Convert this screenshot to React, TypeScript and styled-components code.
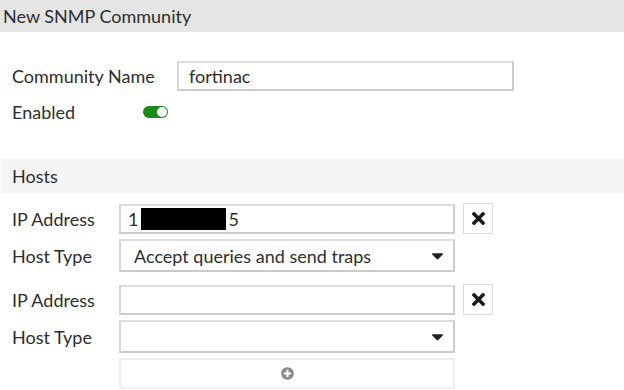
import React, { useState } from "react";
import styled, { createGlobalStyle } from "styled-components";
import { FaTimes, FaCaretDown, FaPlusCircle } from "react-icons/fa";

const GlobalStyle = createGlobalStyle`
  html, body {
    margin: 0;
    padding: 0;
    background: #ffffff;
    font-family: Lato, "Open Sans", sans-serif;
    color: #333333;
  }
`;

type Host = {
  ip: string;
  masked: boolean;
  type: string;
};

const App = () => {
  const [enabled, setEnabled] = useState<boolean>(true);
  const hosts: Host[] = [
    { ip: "1", masked: true, type: "Accept queries and send traps" },
    { ip: "", masked: false, type: "" },
  ];

  return (
    <Page>
      <GlobalStyle />
      <TitleBar>New SNMP Community</TitleBar>

      <TopForm>
        <Label>Community Name</Label>
        <TextBox $pad={10}>fortinac</TextBox>
        <Label>Enabled</Label>
        <ToggleCell>
          <Toggle $on={enabled} onClick={() => setEnabled(!enabled)}>
            <Knob $on={enabled} />
          </Toggle>
        </ToggleCell>
      </TopForm>

      <SectionBar>Hosts</SectionBar>

      <HostList>
        {hosts.map((h, i) => (
          <HostGroup key={i}>
            <Label>IP Address</Label>
            <TextBox $pad={7}>
              {h.ip}
              {h.masked && (
                <>
                  <Mask />5
                </>
              )}
            </TextBox>
            <RemoveButton>
              <FaTimes size={19} />
            </RemoveButton>
            <Label>Host Type</Label>
            <SelectBox>
              <span>{h.type}</span>
              <Caret>
                <FaCaretDown size={19} />
              </Caret>
            </SelectBox>
          </HostGroup>
        ))}
        <AddRow>
          <AddButton>
            <FaPlusCircle size={13} />
          </AddButton>
        </AddRow>
      </HostList>
    </Page>
  );
};

export default App;

const Page = styled.div`
  width: 624px;
  height: 390px;
  overflow: hidden;
`;

const TitleBar = styled.div`
  height: 32px;
  background: #e5e5e5;
  padding-left: 3px;
  font-size: 18px;
  line-height: 32px;
  color: #2e2e2e;
`;

const TopForm = styled.div`
  display: grid;
  grid-template-columns: 165px 337px;
  row-gap: 9px;
  align-items: center;
  align-content: start;
  padding: 29px 0 0 12px;
  height: 127px;
  box-sizing: border-box;
`;

const Label = styled.div`
  font-size: 18px;
  color: #2e2e2e;
`;

const TextBox = styled.div<{ $pad: number }>`
  height: 30px;
  box-sizing: border-box;
  border: 2px solid #cbcbcb;
  border-top-color: #dedede;
  border-left-color: #d6d6d6;
  padding-left: ${(p) => p.$pad}px;
  display: flex;
  align-items: center;
  font-size: 18px;
  color: #2e2e2e;
  background: #fff;
`;

const Mask = styled.span`
  display: inline-block;
  width: 85px;
  height: 22px;
  background: #000;
  margin: 0 2px 0 3px;
`;

const ToggleCell = styled.div`
  height: 24px;
  display: flex;
  align-items: center;
`;

const Toggle = styled.div<{ $on: boolean }>`
  width: 25px;
  height: 12px;
  border-radius: 6px;
  background: ${(p) => (p.$on ? "#1a8a1a" : "#bbb")};
  position: relative;
  cursor: pointer;
  margin-left: -34px;
`;

const Knob = styled.div<{ $on: boolean }>`
  position: absolute;
  top: 1px;
  left: ${(p) => (p.$on ? "14px" : "1px")};
  width: 10px;
  height: 10px;
  border-radius: 50%;
  background: #fff;
`;

const SectionBar = styled.div`
  margin-left: 1px;
  height: 34px;
  background: #f4f4f4;
  padding-left: 11px;
  font-size: 18px;
  line-height: 34px;
  color: #2e2e2e;
`;

const HostList = styled.div`
  display: flex;
  flex-direction: column;
  gap: 12px;
  padding: 10px 0 0 12px;
`;

const HostGroup = styled.div`
  display: grid;
  grid-template-columns: 99px 336px 30px;
  column-gap: 8px;
  row-gap: 5px;
  align-items: center;
`;

const RemoveButton = styled.div`
  width: 30px;
  height: 31px;
  box-sizing: border-box;
  border: 1px solid #dcdcdc;
  display: flex;
  align-items: center;
  justify-content: center;
  color: #1a1a1a;
`;

const SelectBox = styled.div`
  grid-column: 2;
  height: 33px;
  box-sizing: border-box;
  border: 2px solid #cbcbcb;
  border-top-color: #dedede;
  border-left-color: #d6d6d6;
  padding: 0 6px 0 13px;
  display: flex;
  align-items: center;
  justify-content: space-between;
  font-size: 18px;
  color: #2e2e2e;
`;

const Caret = styled.span`
  display: flex;
  color: #222;
`;

const AddRow = styled.div`
  display: grid;
  grid-template-columns: 107px 336px;
  margin-top: -7px;
`;

const AddButton = styled.div`
  grid-column: 2;
  height: 31px;
  box-sizing: border-box;
  border: 2px solid #efefef;
  display: flex;
  align-items: center;
  justify-content: center;
  color: #8a8a8a;
`;
